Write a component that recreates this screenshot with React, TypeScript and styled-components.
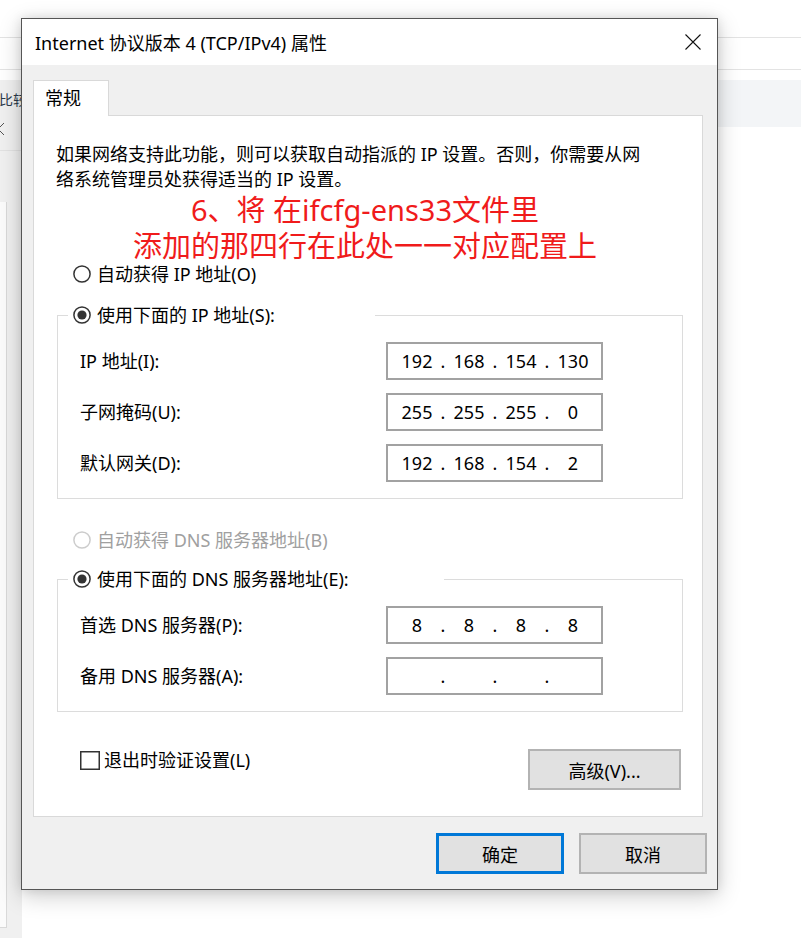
import React from "react";
import styled, { createGlobalStyle } from "styled-components";

const FONT = `"Noto Sans", "Noto Sans CJK SC", sans-serif`;

const GlobalStyle = createGlobalStyle`
  html, body { margin: 0; padding: 0; background: #ffffff; }
  body { font-family: ${FONT}; color: #000; }
  * { box-sizing: border-box; }
`;

/* ---------- background page ---------- */
const Desktop = styled.div`
  position: relative;
  width: 801px;
  height: 938px;
  overflow: hidden;
  background: #ffffff;
  display: flex;
  flex-direction: column;
  font-family: ${FONT};
`;

const HeaderLine = styled.div<{ $h: number }>`
  flex: none;
  height: ${(p) => p.$h}px;
  border-bottom: 1px solid #e3e3e3;
`;

const Spacer = styled.div<{ $h: number }>`
  flex: none;
  height: ${(p) => p.$h}px;
`;

const Columns = styled.div`
  flex: 1;
  display: flex;
`;

const SideCol = styled.div`
  flex: none;
  width: 22px;
  display: flex;
  flex-direction: column;
  background: #f0f0f0;
`;

const SideHead = styled.div`
  flex: none;
  height: 71px;
  border-bottom: 1px solid #e2e2e2;
  padding-top: 10px;
  display: flex;
  flex-direction: column;
  gap: 12px;
`;

const SideText = styled.span`
  font-size: 14px;
  line-height: 20px;
  color: #2b3a4a;
  white-space: nowrap;
  margin-left: -1px;
`;

const SideChevron = styled.svg`
  margin-left: -3px;
`;

const SideBox = styled.div`
  margin-top: 51px;
  width: 7px;
  height: 726px;
  background: #fbfbfb;
  border-right: 1px solid #d9d9d9;
  border-bottom: 1px solid #d9d9d9;
`;

const MainCol = styled.div`
  flex: 1;
  display: flex;
  flex-direction: column;
`;

const Band = styled.div`
  flex: none;
  height: 47px;
  background: #f3f5f7;
`;

/* ---------- dialog window ---------- */
const Window = styled.div`
  position: absolute;
  left: 21px;
  top: 18px;
  width: 697px;
  border: 1px solid #555555;
  background: #f0f0f0;
  box-shadow: 0 6px 22px rgba(0, 0, 0, 0.2), 0 0 10px rgba(0, 0, 0, 0.1);
  display: flex;
  flex-direction: column;
  font-size: 18px;
  color: #000;
`;

const TitleBar = styled.div`
  height: 46px;
  background: #ffffff;
  display: flex;
  align-items: center;
  justify-content: space-between;
  padding: 0 16px 0 13px;
`;

const TitleText = styled.span`
  font-size: 18px;
  white-space: nowrap;
`;

const Body = styled.div`
  padding: 15px 10px 15px 11px;
  display: flex;
  flex-direction: column;
`;

const TabStrip = styled.div`
  display: flex;
`;

const TabItem = styled.div`
  position: relative;
  z-index: 1;
  width: 76px;
  height: 36px;
  margin-bottom: -1px;
  background: #ffffff;
  border: 1px solid #d9d9d9;
  border-bottom: none;
  padding-left: 11px;
  line-height: 34px;
  font-size: 18px;
`;

const Panel = styled.div`
  margin-right: 4px;
  background: #ffffff;
  border: 1px solid #d9d9d9;
  padding: 26px 0 26px 0;
  display: flex;
  flex-direction: column;
`;

const Description = styled.p`
  margin: 0;
  padding-left: 22px;
  font-size: 18px;
  line-height: 25px;
  white-space: nowrap;
`;

const Annotation = styled.p`
  margin: 0;
  padding-right: 6px;
  text-align: center;
  font-size: 29px;
  line-height: 36px;
  color: #f01b1b;
  white-space: nowrap;
`;

const RadioRow = styled.div<{ $disabled?: boolean }>`
  height: 20px;
  display: flex;
  align-items: center;
  gap: 6px;
  padding-left: 39px;
  line-height: 20px;
  white-space: nowrap;
  color: ${(p) => (p.$disabled ? "#a0a0a0" : "#000")};
`;

const GroupBox = styled.div<{ $mt: number }>`
  margin: ${(p) => p.$mt}px 19px 0 23px;
  border: 1px solid #dcdcdc;
  padding: 0 0 16px 22px;
  display: flex;
  flex-direction: column;
`;

const GroupLegend = styled.div<{ $w: number }>`
  margin: -11px 0 0 -12px;
  width: ${(p) => p.$w}px;
  height: 20px;
  padding-left: 5px;
  background: #ffffff;
  display: flex;
  align-items: center;
  gap: 6px;
  line-height: 20px;
  white-space: nowrap;
`;

const FieldGrid = styled.div`
  margin-top: 17px;
  display: grid;
  grid-template-columns: 306px 217px;
  row-gap: 13px;
  align-items: center;
`;

const FieldLabel = styled.span`
  font-size: 18px;
  line-height: 38px;
  white-space: nowrap;
`;

const IpBox = styled.div`
  height: 38px;
  border: 2px solid #a2a2a2;
  background: #ffffff;
  padding-left: 9px;
  display: grid;
  grid-template-columns: 40px 12px 40px 12px 40px 12px 40px;
  align-items: center;
`;

const Octet = styled.span`
  text-align: center;
  font-size: 18px;
  line-height: 34px;
`;

const Dot = styled.span`
  text-align: center;
  font-size: 18px;
  line-height: 34px;
`;

const BottomRow = styled.div`
  margin-top: 37px;
  padding: 0 21px 0 46px;
  display: flex;
  justify-content: space-between;
  align-items: flex-start;
`;

const CheckLabel = styled.div`
  margin-top: 1px;
  display: flex;
  align-items: center;
  gap: 4px;
  line-height: 20px;
  white-space: nowrap;
`;

const Button = styled.button<{ $w: number; $primary?: boolean }>`
  width: ${(p) => p.$w}px;
  height: 41px;
  padding: 0;
  background: #e1e1e1;
  border: ${(p) => (p.$primary ? "3px solid #0078d7" : "2px solid #b3b3b3")};
  font-family: ${FONT};
  font-size: 18px;
  color: #000;
  cursor: default;
`;

const Footer = styled.div`
  margin-top: 16px;
  display: flex;
  justify-content: flex-end;
  gap: 15px;
`;

/* ---------- small drawings ---------- */
const Radio: React.FC<{ checked?: boolean; disabled?: boolean }> = ({ checked, disabled }) => (
  <svg width="18" height="18" viewBox="0 0 18 18" style={{ flex: "none" }}>
    <circle cx="9" cy="9" r="8.1" fill="#fff" stroke={disabled ? "#cccccc" : "#333333"} strokeWidth="1.5" />
    {checked && <circle cx="9" cy="9" r="4.6" fill="#333333" />}
  </svg>
);

const CheckBox: React.FC = () => (
  <svg width="20" height="19" viewBox="0 0 20 19" style={{ flex: "none" }}>
    <rect x="0.75" y="0.75" width="18.5" height="17.5" fill="#fff" stroke="#333333" strokeWidth="1.5" />
  </svg>
);

const CloseIcon: React.FC = () => (
  <svg width="16" height="16" viewBox="0 0 16 16">
    <path d="M0.5 0.5 L15.5 15.5 M15.5 0.5 L0.5 15.5" stroke="#111" strokeWidth="1.1" fill="none" />
  </svg>
);

const IpField: React.FC<{ octets: string[] }> = ({ octets }) => (
  <IpBox>
    {octets.map((o, i) => (
      <React.Fragment key={i}>
        <Octet>{o}</Octet>
        {i < 3 && <Dot>.</Dot>}
      </React.Fragment>
    ))}
  </IpBox>
);

const ipRows = [
  { label: "IP 地址(I):", octets: ["192", "168", "154", "130"] },
  { label: "子网掩码(U):", octets: ["255", "255", "255", "0"] },
  { label: "默认网关(D):", octets: ["192", "168", "154", "2"] },
];

const dnsRows = [
  { label: "首选 DNS 服务器(P):", octets: ["8", "8", "8", "8"] },
  { label: "备用 DNS 服务器(A):", octets: ["", "", "", ""] },
];

export default function App() {
  return (
    <>
      <GlobalStyle />
      <Desktop>
        <HeaderLine $h={38} />
        <HeaderLine $h={32} />
        <Spacer $h={10} />
        <Columns>
          <SideCol>
            <SideHead>
              <SideText>比较</SideText>
              <SideChevron width="8" height="14" viewBox="0 0 8 14">
                <path d="M7 1 L1 7 L7 13" stroke="#555" strokeWidth="1" fill="none" />
              </SideChevron>
            </SideHead>
            <SideBox />
          </SideCol>
          <MainCol>
            <Band />
          </MainCol>
        </Columns>

        <Window>
          <TitleBar>
            <TitleText>Internet 协议版本 4 (TCP/IPv4) 属性</TitleText>
            <CloseIcon />
          </TitleBar>
          <Body>
            <TabStrip>
              <TabItem>常规</TabItem>
            </TabStrip>
            <Panel>
              <Description>
                如果网络支持此功能，则可以获取自动指派的 IP 设置。否则，你需要从网
                <br />
                络系统管理员处获得适当的 IP 设置。
              </Description>
              <Annotation>
                6、将 在ifcfg-ens33文件里
                <br />
                添加的那四行在此处一一对应配置上
              </Annotation>
              <RadioRow>
                <Radio />
                自动获得 IP 地址(O)
              </RadioRow>
              <GroupBox $mt={31}>
                <GroupLegend $w={307}>
                  <Radio checked />
                  使用下面的 IP 地址(S):
                </GroupLegend>
                <FieldGrid>
                  {ipRows.map((r) => (
                    <React.Fragment key={r.label}>
                      <FieldLabel>{r.label}</FieldLabel>
                      <IpField octets={r.octets} />
                    </React.Fragment>
                  ))}
                </FieldGrid>
              </GroupBox>
              <Spacer $h={31} />
              <RadioRow $disabled>
                <Radio disabled />
                自动获得 DNS 服务器地址(B)
              </RadioRow>
              <GroupBox $mt={29}>
                <GroupLegend $w={376}>
                  <Radio checked />
                  使用下面的 DNS 服务器地址(E):
                </GroupLegend>
                <FieldGrid>
                  {dnsRows.map((r) => (
                    <React.Fragment key={r.label}>
                      <FieldLabel>{r.label}</FieldLabel>
                      <IpField octets={r.octets} />
                    </React.Fragment>
                  ))}
                </FieldGrid>
              </GroupBox>
              <BottomRow>
                <CheckLabel>
                  <CheckBox />
                  退出时验证设置(L)
                </CheckLabel>
                <Button $w={153}>高级(V)...</Button>
              </BottomRow>
            </Panel>
            <Footer>
              <Button $w={128} $primary>
                确定
              </Button>
              <Button $w={128}>取消</Button>
            </Footer>
          </Body>
        </Window>
      </Desktop>
    </>
  );
}
